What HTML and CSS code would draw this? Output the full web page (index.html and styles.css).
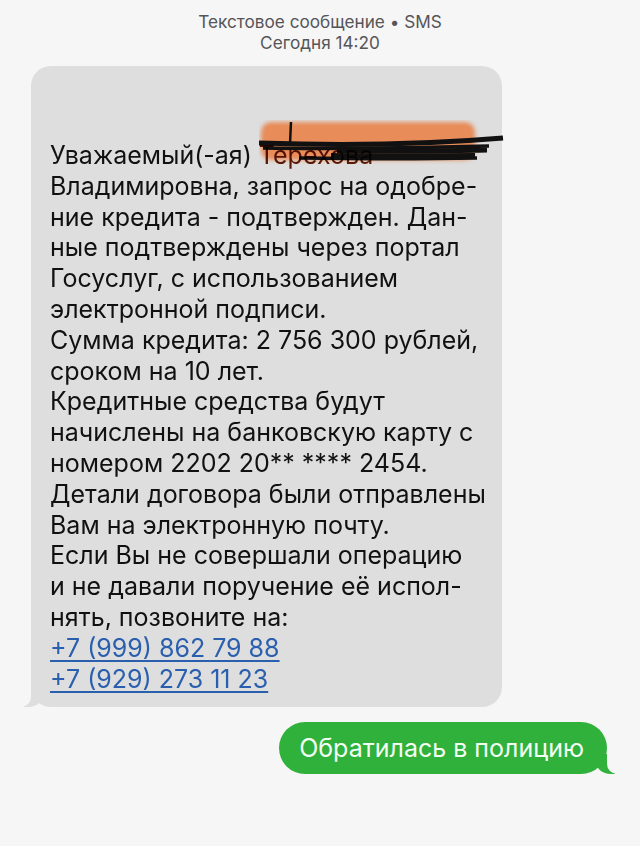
FILE: index.html
```html
<!DOCTYPE html>
<html lang="ru">
<head>
<meta charset="utf-8">
<title>SMS</title>
<link rel="stylesheet" href="styles.css">
</head>
<body>
<div class="header">
  <div>Текстовое сообщение • SMS</div>
  <div>Сегодня 14:20</div>
</div>
<div class="thread">
  <div class="msg msg-in">
    <p class="body">Уважаемый(-ая) <span class="redact">Терехова<svg class="scribble" width="250" height="50" viewBox="0 0 250 50"><defs><filter id="b" x="-10%" y="-30%" width="120%" height="160%"><feGaussianBlur stdDeviation="2.2"/></filter></defs><rect x="2" y="2" width="214" height="38" rx="10" fill="#e8844f" fill-opacity="0.92" filter="url(#b)"/><path d="M32 2 L31 24" stroke="#111" stroke-width="2.5" fill="none"/><path d="M0 23 C60 25 150 26 244 18" stroke="#111" stroke-width="5" fill="none"/><path d="M4 28 C70 29 150 28 230 26" stroke="#111" stroke-width="3.5" fill="none"/><path d="M78 31 C120 32 170 31 228 30" stroke="#111" stroke-width="5" fill="none"/><path d="M72 35 C120 36 170 35 216 35" stroke="#111" stroke-width="4" fill="none"/><path d="M40 38 C100 39 170 39 218 38" stroke="#111" stroke-width="3.5" fill="none"/></svg></span><br>Владимировна, запрос на одобре-<br>ние кредита - подтвержден. Дан-<br>ные подтверждены через портал<br>Госуслуг, с использованием<br>электронной подписи.<br>Сумма кредита: 2 756 300 рублей,<br>сроком на 10 лет.<br>Кредитные средства будут<br>начислены на банковскую карту с<br>номером 2202 20** **** 2454.<br>Детали договора были отправлены<br>Вам на электронную почту.<br>Если Вы не совершали операцию<br>и не давали поручение её испол-<br>нять, позвоните на:<br><a class="phone" href="#">+7 (999) 862 79 88</a><br><a class="phone" href="#">+7 (929) 273 11 23</a></p>
  </div>
  <div class="msg msg-out">Обратилась в полицию</div>
</div>
</body>
</html>
```
FILE: styles.css
```css
html, body {
  margin: 0;
  padding: 0;
  background: #f6f6f6;
}
body {
  width: 640px;
  height: 846px;
  overflow: hidden;
  font-family: Inter, "Liberation Sans", Arial, sans-serif;
}
.header {
  padding-top: 11px;
  text-align: center;
  font-size: 17.2px;
  line-height: 21px;
  color: #555558;
}
.thread {
  display: flex;
  flex-direction: column;
  padding-top: 13px;
}
.msg {
  position: relative;
  font-size: 25px;
}
.msg-in {
  align-self: flex-start;
  margin-left: 31px;
  width: 471px;
  box-sizing: border-box;
  background: #dedede;
  border-radius: 20px;
  padding: 74px 10px 13px 19px;
  color: #111;
}
.msg-in::before {
  content: "";
  position: absolute;
  left: -7px;
  bottom: 0;
  width: 20px;
  height: 20px;
  background: #dedede;
  border-bottom-right-radius: 16px 14px;
}
.msg-in::after {
  content: "";
  position: absolute;
  left: -26px;
  bottom: 0;
  width: 26px;
  height: 20px;
  background: #f6f6f6;
  border-bottom-right-radius: 10px;
}
.body {
  margin: 0;
  line-height: 30.8px;
  white-space: nowrap;
  position: relative;
  z-index: 1;
}
.redact {
  position: relative;
  color: #5a1a06;
}
.scribble {
  position: absolute;
  left: 0;
  top: -20px;
  mix-blend-mode: multiply;
}
.phone {
  color: #2a5fae;
  text-decoration: underline;
  text-decoration-thickness: 1.5px;
  text-underline-offset: 3px;
}
.msg-out {
  align-self: flex-end;
  margin-right: 33px;
  margin-top: 15px;
  height: 52px;
  box-sizing: border-box;
  padding: 0 23px 0 20px;
  display: flex;
  align-items: center;
  background: #2fb13c;
  color: #f4fff4;
  border-radius: 26px;
}
.msg-out::before {
  content: "";
  position: absolute;
  right: -8px;
  bottom: 0;
  width: 20px;
  height: 20px;
  background: #2fb13c;
  border-bottom-left-radius: 16px 14px;
}
.msg-out::after {
  content: "";
  position: absolute;
  right: -26px;
  bottom: 0;
  width: 26px;
  height: 20px;
  background: #f6f6f6;
  border-bottom-left-radius: 10px;
}
```
